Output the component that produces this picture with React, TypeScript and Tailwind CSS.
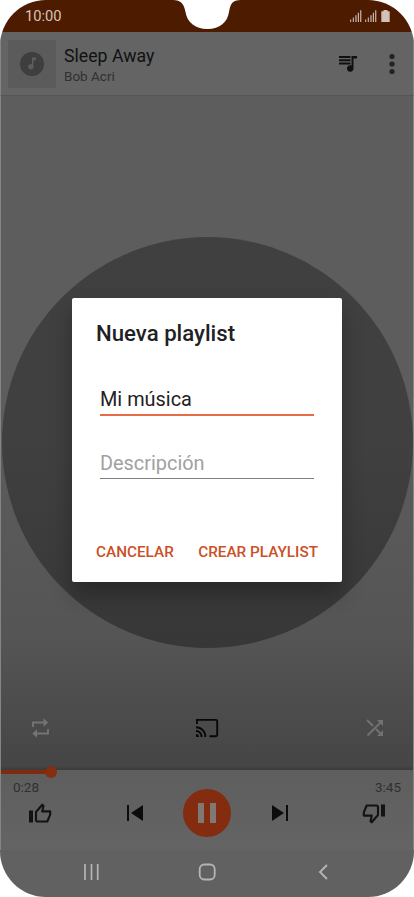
const Svg = ({ w, h, children, className = "" }: { w: number; h: number; children: React.ReactNode; className?: string }) => (
  <svg width={w} height={h} viewBox={`0 0 ${w} ${h}`} className={`block shrink-0 ${className}`}>
    {children}
  </svg>
);

function Signal() {
  return (
    <Svg w={12} h={12}>
      <path d="M.2 9.500h1V12h-1zM2.800 7.500h1V12h-1zM5.400 5.200h1.100V12H5.400zM7.800 2.800h1.100V12H7.800zM10.200.2h1.100V12h-1.100z" fill="#d9c6bd" />
    </Svg>
  );
}

function StatusBar() {
  return (
    <div className="relative flex h-8 shrink-0 items-center bg-[#4c1b00] pl-[25px] pr-6 text-[#dac5bb]">
      <span className="text-[14.7px] leading-4">10:00</span>
      <div className="ml-auto flex items-center gap-[3px]">
        <Signal />
        <Signal />
        <Svg w={9} h={12} className="ml-px">
          <path d="M2.500 0h4v1.300H8.700V12H.3V1.300h2.200z" fill="#d4c1b9" />
        </Svg>
      </div>
      <svg width="72" height="30" viewBox="0 0 72 30" className="absolute left-[171px] top-0">
        <path d="M2 0C10 0 13 4 14.500 12C16 22 24 29 36.500 29C49 29 56.500 22 58 12C59.500 4 61 0 70 0Z" fill="#fff" />
      </svg>
    </div>
  );
}

function Header() {
  return (
    <header className="flex h-16 shrink-0 items-center border-x border-b border-x-[#858585] border-b-[#565656] bg-[#646464] pl-[7px] pr-[18px]">
      <div className="flex size-12 items-center justify-center bg-[#5b5b5b]">
        <Svg w={24} h={24}>
          <circle cx="12" cy="12" r="12" fill="#3e3e3e" />
          <path d="M12 5.500h4v2.700h-2.500v6.600a2.700 2.700 0 1 1-1.500-2.400z" fill="#5d5d5d" />
        </Svg>
      </div>
      <div className="ml-2 mt-0.5 flex flex-col">
        <span className="text-[17.700px] leading-[22px] text-[#111]">Sleep Away</span>
        <span className="text-[13.500px] leading-[18px] text-[#303030]">Bob Acri</span>
      </div>
      <Svg w={18} h={16} className="ml-auto">
        <path d="M0 0h11.500v2H0zM0 3.200h11.500v2H0zM0 6.400h11.500v2H0zM12.500 0H18v2.500h-3.500V12a3.300 3.300 0 1 1-2-2.600z" fill="#101010" />
      </Svg>
      <Svg w={6} h={22} className="ml-8">
        <g fill="#222">
          <circle cx="3" cy="3.500" r="2.600" />
          <circle cx="3" cy="11" r="2.600" />
          <circle cx="3" cy="18.500" r="2.600" />
        </g>
      </Svg>
    </header>
  );
}

function Artwork() {
  return (
    <main className="flex h-[674px] shrink-0 flex-col border-x border-[#858585] bg-linear-to-b from-[#5d5d5d] from-45% via-[#555] via-80% to-[#454545] pt-[141px]">
      <div className="mx-auto size-[411px] shrink-0 rounded-full bg-linear-to-b from-[#404040] from-50% to-[#373737]" />
      <div className="mt-[70px] flex items-center justify-between pl-[30px] pr-[29px]">
        <Svg w={20} h={20}>
          <path d="M2 9V4.500H15M17 11v4.500H5" fill="none" stroke="#747474" strokeWidth="1.900" />
          <path d="M12.500.3l4.700 4.200-4.700 4.200zM6 11.300l-4.700 4.200L6 19.700z" fill="#747474" />
        </Svg>
        <Svg w={24} h={20} className="-ml-[3px]">
          <path d="M1.900 6V1.900H21a1.200 1.200 0 0 1 1.200 1.200V17a1.200 1.200 0 0 1-1.200 1.200H14.500M1 9.200a9.300 9.300 0 0 1 9.300 9.800M1 13a5.500 5.500 0 0 1 5.500 6" fill="none" stroke="#080808" strokeWidth="1.900" />
          <path d="M1 16a3 3 0 0 1 3 3H1z" fill="#080808" />
        </Svg>
        <Svg w={18} h={18}>
          <path d="M1 1l6 6M1.500 16.500L15 3M10 10l5 5" fill="none" stroke="#727272" strokeWidth="2" />
          <path d="M11 1h6v6zM17 11v6h-6z" fill="#727272" />
        </Svg>
      </div>
      <div className="mt-auto h-1 bg-linear-to-b from-[#464646] to-[#3a3a3a]" />
    </main>
  );
}

const Thumb = ({ className = "" }: { className?: string }) => (
  <Svg w={24} h={22} className={className}>
    <path d="M1 8.500h4v12H1z" fill="#131313" />
    <path d="M8 18.500V10l6.300-7.300 1.200 1-1.300 5.700h8v3.200l-2.900 6.900H9z" fill="none" stroke="#131313" strokeWidth="2.100" strokeLinejoin="round" />
  </Svg>
);

function Player() {
  return (
    <section className="flex h-20 shrink-0 flex-col border-x border-[#858585] bg-linear-to-b from-[#5e5e5e] to-[#646464]">
      <div className="relative h-1 w-[50px] bg-[#7f2b0f]">
        <div className="absolute -right-1.5 -top-1 size-3 rounded-full bg-[#852d10]" />
      </div>
      <div className="mt-[5px] flex h-4 items-center justify-between px-3 text-[13.500px] leading-4 text-[#303030]">
        <span>0:28</span>
        <span>3:45</span>
      </div>
      <div className="-mt-1.5 flex h-12 items-center pl-[27px]">
        <Thumb />
        <Svg w={18} h={18} className="ml-[74px]">
          <path d="M1 1h2v16H1zM17 1v16L5 9z" fill="#0c0c0c" />
        </Svg>
        <div className="ml-[39px] flex size-12 items-center justify-center gap-1.5 rounded-full bg-[#832c0f]">
          <div className="h-5 w-1.5 bg-[#7e7976]" />
          <div className="h-5 w-1.5 bg-[#7e7976]" />
        </div>
        <Svg w={18} h={18} className="ml-10">
          <path d="M1 1v16l12-8zM15 1h2v16h-2z" fill="#0c0c0c" />
        </Svg>
        <Thumb className="ml-[73px] mt-0.5 rotate-180" />
      </div>
    </section>
  );
}

function NavBar() {
  return (
    <nav className="flex h-[47px] shrink-0 items-center bg-[#616161] pb-[3px] pl-[83px] pr-[85px]">
      <Svg w={16} h={16}>
        <path d="M2 0v16M8.500 0v16M14.700 0v16" stroke="#b5b5b5" strokeWidth="1.700" />
      </Svg>
      <Svg w={18} h={18} className="ml-[99px]">
        <rect x="1.700" y="1.500" width="15" height="15" rx="4.500" fill="none" stroke="#b5b5b5" strokeWidth="1.800" />
      </Svg>
      <Svg w={11} h={16} className="ml-auto">
        <path d="M9 1L2 8l7 7" fill="none" stroke="#b5b5b5" strokeWidth="1.800" />
      </Svg>
    </nav>
  );
}

function Dialog() {
  return (
    <div className="absolute left-[72px] top-[298px] flex h-[284px] w-[270px] flex-col rounded-[2px] bg-white px-6 pt-[22px] shadow-[0_12px_22px_rgba(0,0,0,0.300)]">
      <h1 className="text-[22.200px] font-medium leading-[26px] text-[#202124]">Nueva playlist</h1>
      <div className="ml-1 mt-[39px] flex h-[31px] w-[214px] border-b-2 border-[#e66b48] text-[19.900px] leading-[30px] text-[#222]">Mi música</div>
      <div className="ml-1 mt-[33px] flex h-[30px] w-[214px] border-b border-[#808080] text-[19.900px] leading-[30px] text-[#a1a1a1]">Descripción</div>
      <div className="mt-[63px] flex justify-between whitespace-nowrap text-[15.300px] font-medium leading-5 text-[#cb5028]">
        <button>CANCELAR</button>
        <button>CREAR PLAYLIST</button>
      </div>
    </div>
  );
}

export default function App() {
  return (
    <div className="h-[897px] w-[414px] overflow-hidden bg-white font-['Roboto',sans-serif]">
      <div className="relative flex h-full flex-col overflow-hidden rounded-[46px]">
        <StatusBar />
        <Header />
        <Artwork />
        <Player />
        <NavBar />
        <Dialog />
      </div>
    </div>
  );
}
